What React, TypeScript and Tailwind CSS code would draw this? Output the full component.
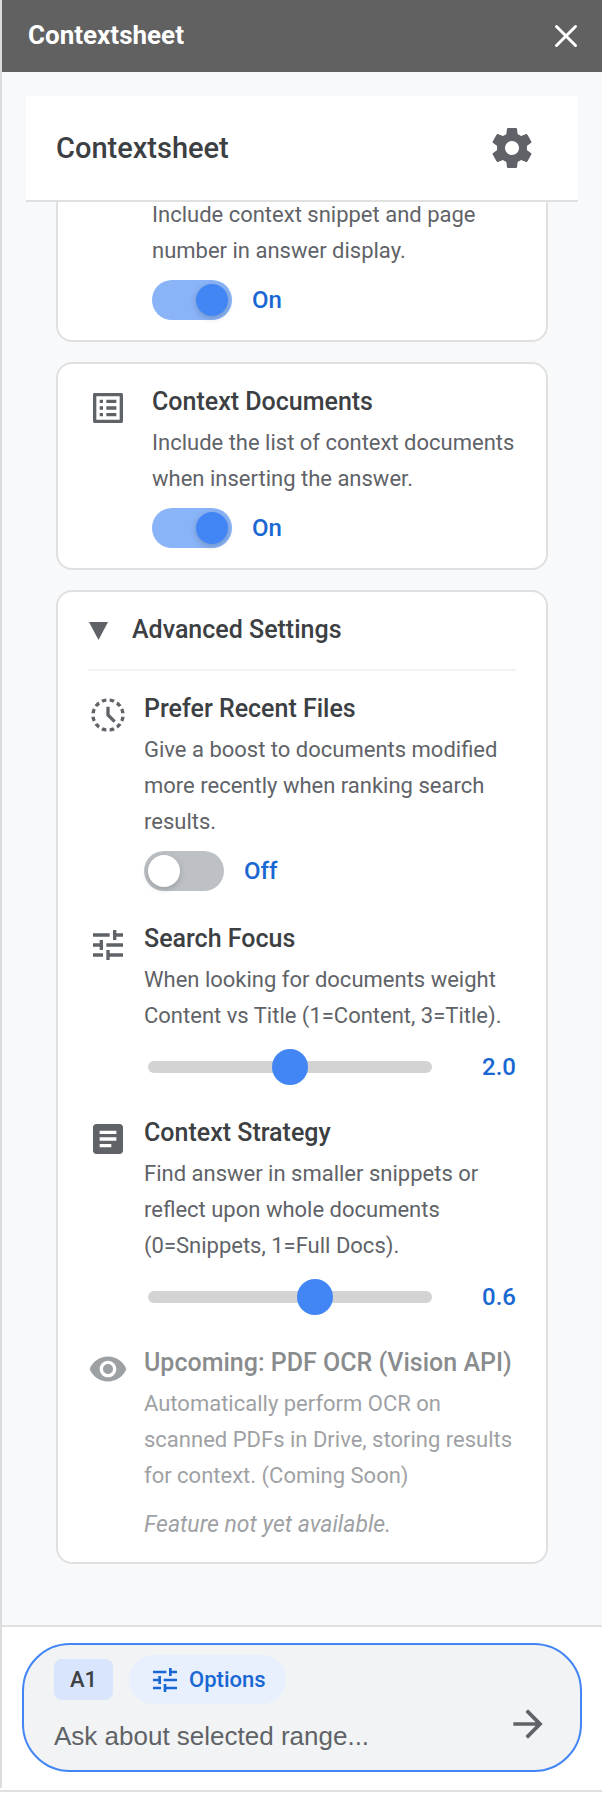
import { useState } from "react";
import type { ReactNode } from "react";
import { MdHistoryToggleOff } from "react-icons/md";

const PATHS = {
  settings:
    "M19.43 12.98c.04-.32.07-.64.07-.98s-.03-.66-.07-.98l2.11-1.65c.19-.15.24-.42.12-.64l-2-3.46c-.12-.22-.39-.3-.61-.22l-2.49 1c-.52-.4-1.08-.73-1.69-.98l-.38-2.65C14.46 2.18 14.25 2 14 2h-4c-.25 0-.46.18-.49.42l-.38 2.65c-.61.25-1.17.59-1.69.98l-2.49-1c-.23-.09-.49 0-.61.22l-2 3.46c-.13.22-.07.49.12.64l2.11 1.65c-.04.32-.07.65-.07.98s.03.66.07.98l-2.11 1.65c-.19.15-.24.42-.12.64l2 3.46c.12.22.39.3.61.22l2.49-1c.52.4 1.08.73 1.69.98l.38 2.65c.03.24.24.42.49.42h4c.25 0 .46-.18.49-.42l.38-2.65c.61-.25 1.17-.59 1.69-.98l2.49 1c.23.09.49 0 .61-.22l2-3.46c.12-.22.07-.49-.12-.64l-2.11-1.65zM12 15.5c-1.93 0-3.5-1.57-3.5-3.5s1.57-3.5 3.5-3.5 3.5 1.57 3.5 3.5-1.57 3.5-3.5 3.5z",
  list: "M19 5v14H5V5h14m1.1-2H3.9c-.5 0-.9.4-.9.9v16.2c0 .4.4.9.9.9h16.2c.4 0 .9-.5.9-.9V3.9c0-.5-.5-.9-.9-.9zM11 7h6v2h-6V7zm0 4h6v2h-6v-2zm0 4h6v2h-6v-2zM7 7h2v2H7V7zm0 4h2v2H7v-2zm0 4h2v2H7v-2z",
  tune: "M3 17v2h6v-2H3zM3 5v2h10V5H3zm10 16v-2h8v-2h-8v-2h-2v6h2zM7 9v2H3v2h4v2h2V9H7zm14 4v-2H11v2h10zm-6-4h2V7h4V5h-4V3h-2v6z",
  article:
    "M19 3H5c-1.1 0-2 .9-2 2v14c0 1.1.9 2 2 2h14c1.1 0 2-.9 2-2V5c0-1.1-.9-2-2-2zm-5 14H7v-2h7v2zm3-4H7v-2h10v2zm0-4H7V7h10v2z",
  eye: "M12 4.5C7 4.5 2.73 7.61 1 12c1.73 4.39 6 7.5 11 7.5s9.27-3.11 11-7.5c-1.73-4.39-6-7.5-11-7.5zM12 17c-2.76 0-5-2.24-5-5s2.24-5 5-5 5 2.24 5 5-2.24 5-5 5zm0-8c-1.66 0-3 1.34-3 3s1.34 3 3 3 3-1.34 3-3-1.34-3-3-3z",
  arrow: "M12 4l-1.41 1.41L16.17 11H4v2h12.17l-5.58 5.59L12 20l8-8z",
};

function Icon({ name, className }: { name: keyof typeof PATHS; className: string }) {
  return (
    <svg viewBox="0 0 24 24" fill="currentColor" aria-hidden="true" className={className}>
      <path d={PATHS[name]} />
    </svg>
  );
}

function Toggle({ label, initial }: { label: string; initial: boolean }) {
  const [on, setOn] = useState(initial);
  return (
    <label className="mt-[11px] flex items-center gap-5">
      <input
        type="checkbox"
        role="switch"
        aria-label={label}
        checked={on}
        onChange={(e) => setOn(e.target.checked)}
        className="h-10 w-20 shrink-0 cursor-pointer appearance-none rounded-full bg-[#bdc1c6] p-1 before:block before:size-8 before:rounded-full before:bg-white before:shadow-[0_2px_6px_rgba(0,0,0,0.2)] checked:bg-[#8ab4f8] checked:before:ml-10 checked:before:bg-[#4285f4]"
      />
      <span className="text-2xl/9 font-medium text-[#1967d2]">{on ? "On" : "Off"}</span>
    </label>
  );
}

function Slider({ label, min, max, initial }: { label: string; min: number; max: number; initial: number }) {
  const [value, setValue] = useState(initial);
  return (
    <div className="mt-[15px] flex items-center gap-4 pl-1">
      <input
        type="range"
        aria-label={label}
        min={min}
        max={max}
        step={0.1}
        value={value}
        onChange={(e) => setValue(Number(e.target.value))}
        className="h-3 min-w-0 flex-1 cursor-pointer appearance-none rounded-full bg-[#d3d3d3] [&::-webkit-slider-thumb]:size-9 [&::-webkit-slider-thumb]:appearance-none [&::-webkit-slider-thumb]:rounded-full [&::-webkit-slider-thumb]:bg-[#4285f4]"
      />
      <output className="w-17 text-right text-2xl/9 font-medium text-[#1967d2]">{value.toFixed(1)}</output>
    </div>
  );
}

function Setting({
  icon,
  title,
  text,
  gap = "gap-4",
  children,
}: {
  icon: ReactNode;
  title: string;
  text: string;
  gap?: string;
  children: ReactNode;
}) {
  return (
    <div className={`flex items-start ${gap}`}>
      {icon}
      <div className="min-w-0 flex-1">
        <h3 className="text-[25px]/9 font-medium text-[#3c4043]">{title}</h3>
        <p className="mt-[5px] text-[22px]/9 text-[#5f6368]">{text}</p>
        {children}
      </div>
    </div>
  );
}

const iconClass = "mt-1 size-10 shrink-0 text-[#5f6368]";

export default function App() {
  const [open, setOpen] = useState(true);
  return (
    <div className="border-b-2 border-[#e0e0e0] bg-white pb-0.5 font-[Roboto,sans-serif]">
      <div className="flex flex-col border-l-2 border-[#dadce0]">
        <header className="flex h-18 items-center justify-between bg-[#616161] pr-6 pl-[26px] text-white">
          <h1 className="pb-0.5 font-['Roboto',sans-serif] text-[26px]/9 font-bold">Contextsheet</h1>
          <button type="button" aria-label="Close">
            <svg viewBox="0 0 24 24" fill="none" stroke="currentColor" strokeWidth="3" strokeLinecap="round" className="size-6">
              <path d="M2.5 2.5l19 19M21.5 2.5l-19 19" />
            </svg>
          </button>
        </header>

        <main className="bg-[#f8f9fb] px-6 pt-6 pb-[61px]">
          <div className="relative z-10 flex h-[106px] items-center justify-between border-b-2 border-[#e0e0e0] bg-white pr-[42px] pl-[30px]">
            <h2 className="text-[29px]/9 font-medium text-[#3c4043]">Contextsheet</h2>
            <button type="button" aria-label="Settings">
              <Icon name="settings" className="size-12 text-[#5f6368]" />
            </button>
          </div>

          <div className="-mt-[5px] flex flex-col gap-5 px-[30px]">
            <section className="rounded-b-2xl border-2 border-t-0 border-[#e0e0e0] bg-white pr-[30px] pb-5 pl-[94px]">
              <p className="text-[22px]/9 text-[#5f6368]">Include context snippet and page number in answer display.</p>
              <Toggle label="Include context snippet" initial={true} />
            </section>

            <section className="rounded-2xl border-2 border-[#e0e0e0] bg-white py-5 pr-7 pl-[30px]">
              <Setting
                gap="gap-6"
                icon={<Icon name="list" className={iconClass} />}
                title="Context Documents"
                text="Include the list of context documents when inserting the answer."
              >
                <Toggle label="Context Documents" initial={true} />
              </Setting>
            </section>

            <section className="rounded-2xl border-2 border-[#e0e0e0] bg-white px-[30px] pt-5 pb-[19px]">
              <button
                type="button"
                aria-expanded={open}
                onClick={() => setOpen(!open)}
                className="flex w-full items-center gap-6 border-b-2 border-[#f1f3f4] pb-[21px] text-left text-[25px]/9 font-medium text-[#3c4043]"
              >
                <svg viewBox="0 0 20 20" fill="currentColor" aria-hidden="true" className="size-5 text-[#5f6368]">
                  <path d="M1 2h19L10.5 20z" />
                </svg>
                Advanced Settings
              </button>
              {open && (
                <div className="flex flex-col gap-[30px] pt-5">
                  <Setting
                    icon={<MdHistoryToggleOff aria-hidden="true" className={iconClass} />}
                    title="Prefer Recent Files"
                    text="Give a boost to documents modified more recently when ranking search results."
                  >
                    <Toggle label="Prefer Recent Files" initial={false} />
                  </Setting>
                  <Setting
                    icon={<Icon name="tune" className={iconClass} />}
                    title="Search Focus"
                    text="When looking for documents weight Content vs Title (1=Content, 3=Title)."
                  >
                    <Slider label="Search Focus" min={1} max={3} initial={2} />
                  </Setting>
                  <Setting
                    icon={<Icon name="article" className={iconClass} />}
                    title="Context Strategy"
                    text="Find answer in smaller snippets or reflect upon whole documents (0=Snippets, 1=Full Docs)."
                  >
                    <Slider label="Context Strategy" min={0} max={1} initial={0.6} />
                  </Setting>
                  <div className="opacity-60">
                    <Setting
                      icon={<Icon name="eye" className={iconClass} />}
                      title="Upcoming: PDF OCR (Vision API)"
                      text="Automatically perform OCR on scanned PDFs in Drive, storing results for context. (Coming Soon)"
                    >
                      <p className="mt-[13px] text-[23px]/9 text-[#5f6368] italic">Feature not yet available.</p>
                    </Setting>
                  </div>
                </div>
              )}
            </section>
          </div>
        </main>

        <footer className="border-t-2 border-[#e0e0e0] bg-white px-5 py-4">
          <form
            onSubmit={(e) => e.preventDefault()}
            className="flex items-end justify-between rounded-[48px] border-2 border-[#4285f4] bg-[#f1f3f4] pt-2.5 pr-[30px] pb-2 pl-[30px]"
          >
            <div className="min-w-0 flex-1">
              <div className="flex items-center gap-4">
                <span className="rounded-lg bg-[#d9e5fc] px-4 py-1 text-[22px]/[33px] font-medium text-[#3c4043]">A1</span>
                <button
                  type="button"
                  className="flex items-center gap-2 rounded-full bg-[#e8f0fe] px-5 py-2 text-[22px]/[33px] font-medium text-[#1967d2]"
                >
                  <Icon name="tune" className="size-8" />
                  Options
                </button>
              </div>
              <input
                type="text"
                aria-label="Question"
                placeholder="Ask about selected range..."
                className="block h-[58px] w-full bg-transparent pt-1.5 font-[Liberation_Sans,Arial,sans-serif] text-[26px] text-[#3c4043] outline-none placeholder:text-[#5f6368]"
              />
            </div>
            <button type="submit" aria-label="Send" className="mb-4">
              <Icon name="arrow" className="size-11 text-[#5f6368]" />
            </button>
          </form>
        </footer>
      </div>
    </div>
  );
}
